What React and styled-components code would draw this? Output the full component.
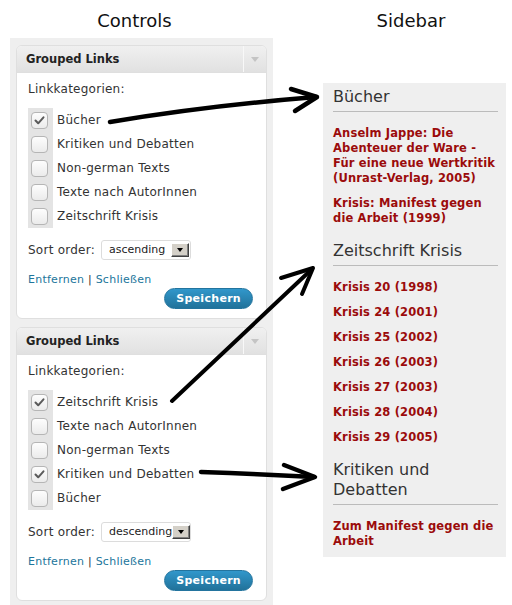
import React from "react";
import styled, { createGlobalStyle } from "styled-components";

const GlobalStyle = createGlobalStyle`
  html, body {
    margin: 0;
    padding: 0;
    background: #fff;
  }
  body {
    font-family: "DejaVu Sans", Verdana, sans-serif;
    color: #333;
  }
`;

const Page = styled.div`
  position: relative;
  width: 512px;
  height: 605px;
  overflow: hidden;
  display: flex;
  align-items: flex-start;
  gap: 50px;
  padding-left: 10px;
  box-sizing: border-box;
`;

const Column = styled.div`
  width: ${props => props.$width}px;
  display: flex;
  flex-direction: column;
  flex-shrink: 0;
`;

const Title = styled.div`
  padding: 10px ${props => props.$shift}px 0 0;
  font-size: 18px;
  line-height: 22px;
  color: #111;
  text-align: center;
`;

const Panel = styled.div`
  margin-top: 6px;
  background: #efefef;
  padding: 7px 6px 5px;
  display: flex;
  flex-direction: column;
  gap: 8px;
`;

const Card = styled.div`
  background: #fff;
  border: 1px solid #dfdfdf;
  border-radius: 6px;
  overflow: hidden;
`;

const CardHead = styled.div`
  display: flex;
  height: 26px;
  border-bottom: 1px solid #dfdfdf;
  background: linear-gradient(#f0f0f0, #e1e1e1);
`;

const CardTitle = styled.div`
  flex: 1;
  padding-left: 9px;
  font-size: 11.5px;
  font-weight: bold;
  line-height: 26px;
  color: #222;
`;

const Toggle = styled.div`
  width: 22px;
  border-left: 1px solid #f8f8f8;
  display: flex;
  align-items: center;
  justify-content: center;
  &::after {
    content: "";
    border-left: 4px solid transparent;
    border-right: 4px solid transparent;
    border-top: 5px solid #c4c4c4;
  }
`;

const CardBody = styled.div`
  padding: 8px 13px 9px 11px;
  font-size: 12px;
  line-height: 16px;
  letter-spacing: 0.25px;
  color: #333;
`;

const CheckList = styled.div`
  margin-top: 11px;
  display: flex;
  flex-direction: column;
`;

const CheckRow = styled.div`
  display: flex;
  align-items: center;
  height: 24px;
`;

const CheckCell = styled.div`
  width: 25px;
  height: 24px;
  padding-left: 3px;
  box-sizing: border-box;
  background: #e4e4e4;
  display: flex;
  align-items: center;
`;

const Box = styled.div`
  width: 17px;
  height: 17px;
  box-sizing: border-box;
  border: 1px solid #b5b5b5;
  border-radius: 4px;
  background: linear-gradient(#fdfdfd, #ebebeb);
  display: flex;
  align-items: center;
  justify-content: center;
`;

const CheckLabel = styled.span`
  margin-left: 4px;
`;

const SortRow = styled.div`
  margin-top: 12px;
  display: flex;
  align-items: center;
  gap: 6px;
`;

const Select = styled.div`
  width: 90px;
  height: 20px;
  box-sizing: border-box;
  border: 1px solid #dcdcdc;
  border-radius: 3px;
  background: #fff;
  padding-left: 7px;
  display: flex;
  align-items: center;
  justify-content: space-between;
  font-size: 11px;
  letter-spacing: 0;
  color: #222;
  white-space: nowrap;
  overflow: hidden;
`;

const SelectButton = styled.span`
  flex-shrink: 0;
  width: 18px;
  height: 14px;
  margin-right: 1px;
  box-sizing: border-box;
  background: #d4d0c8;
  border: 1px solid;
  border-color: #fff #404040 #404040 #fff;
  box-shadow: inset -1px -1px 0 #808080;
  display: flex;
  align-items: center;
  justify-content: center;
  &::after {
    content: "";
    border-left: 3px solid transparent;
    border-right: 3px solid transparent;
    border-top: 4px solid #000;
  }
`;

const Actions = styled.div`
  margin-top: 13px;
  font-size: 11px;
  line-height: 14px;
  color: #333;
`;

const ActionLink = styled.a`
  color: #21759b;
  text-decoration: none;
`;

const ButtonRow = styled.div`
  margin-top: 1px;
  display: flex;
  justify-content: flex-end;
`;

const SaveButton = styled.button`
  height: 21px;
  padding: 0 11px;
  border: 1px solid #23749e;
  border-radius: 11px;
  background: linear-gradient(#3197cb, #21729a);
  color: #fff;
  font-family: "DejaVu Sans", Verdana, sans-serif;
  font-size: 11px;
  font-weight: bold;
  letter-spacing: 0.3px;
  line-height: 19px;
  cursor: pointer;
`;

const Sidebar = styled.div`
  margin-top: 51px;
  background: #efefef;
  padding: 4px 8px 8px 10px;
`;

const Section = styled.div`
  & + & {
    margin-top: 15px;
  }
`;

const SectionHead = styled.h3`
  margin: 0;
  padding-bottom: 4px;
  border-bottom: 1px solid #bbb;
  font-size: 16px;
  line-height: 20px;
  font-weight: normal;
  color: #333;
`;

const LinkList = styled.ul`
  list-style: none;
  margin: 14px 0 0;
  padding: 0 2px 0 0;
`;

const LinkItem = styled.li`
  font-size: 11.5px;
  line-height: 15px;
  font-weight: bold;
  letter-spacing: 0.15px;
  & + & {
    margin-top: 10px;
  }
`;

const SideLink = styled.a`
  color: #9b0b0b;
  text-decoration: none;
`;

const Arrows = styled.svg`
  position: absolute;
  left: 0;
  top: 0;
  width: 512px;
  height: 605px;
  pointer-events: none;
  filter: blur(0.4px);
`;

const Check = () => (
  <svg width="13" height="13" viewBox="0 0 13 13">
    <path
      d="M2.5 6.5 L5.2 9.3 L10.5 3.3"
      fill="none"
      stroke="#5a5a5a"
      strokeWidth="2"
      strokeLinecap="round"
      strokeLinejoin="round"
    />
  </svg>
);

const widgets = [
  {
    order: "ascending",
    items: [
      { label: "Bücher", checked: true },
      { label: "Kritiken und Debatten" },
      { label: "Non-german Texts" },
      { label: "Texte nach AutorInnen" },
      { label: "Zeitschrift Krisis" }
    ]
  },
  {
    order: "descending",
    items: [
      { label: "Zeitschrift Krisis", checked: true },
      { label: "Texte nach AutorInnen" },
      { label: "Non-german Texts" },
      { label: "Kritiken und Debatten", checked: true },
      { label: "Bücher" }
    ]
  }
];

const sections = [
  {
    title: "Bücher",
    links: [
      "Anselm Jappe: Die Abenteuer der Ware - Für eine neue Wertkritik (Unrast-Verlag, 2005)",
      "Krisis: Manifest gegen die Arbeit (1999)"
    ]
  },
  {
    title: "Zeitschrift Krisis",
    links: [
      "Krisis 20 (1998)",
      "Krisis 24 (2001)",
      "Krisis 25 (2002)",
      "Krisis 26 (2003)",
      "Krisis 27 (2003)",
      "Krisis 28 (2004)",
      "Krisis 29 (2005)"
    ]
  },
  {
    title: "Kritiken und Debatten",
    links: ["Zum Manifest gegen die Arbeit"]
  }
];

function Widget({ widget }) {
  return (
    <Card>
      <CardHead>
        <CardTitle>Grouped Links</CardTitle>
        <Toggle />
      </CardHead>
      <CardBody>
        <div>Linkkategorien:</div>
        <CheckList>
          {widget.items.map((item, i) => (
            <CheckRow key={`item_${i}`}>
              <CheckCell>
                <Box>{item.checked ? <Check /> : null}</Box>
              </CheckCell>
              <CheckLabel>{item.label}</CheckLabel>
            </CheckRow>
          ))}
        </CheckList>
        <SortRow>
          <span>Sort order:</span>
          <Select>
            <span>{widget.order}</span>
            <SelectButton />
          </Select>
        </SortRow>
        <Actions>
          <ActionLink href="#">Entfernen</ActionLink> |{" "}
          <ActionLink href="#">Schließen</ActionLink>
        </Actions>
        <ButtonRow>
          <SaveButton>Speichern</SaveButton>
        </ButtonRow>
      </CardBody>
    </Card>
  );
}

export default function App() {
  return (
    <Page>
      <GlobalStyle />
      <Column $width={263}>
        <Title $shift={14}>Controls</Title>
        <Panel>
          {widgets.map((w, i) => (
            <Widget key={`widget_${i}`} widget={w} />
          ))}
        </Panel>
      </Column>
      <Column $width={183}>
        <Title $shift={7}>Sidebar</Title>
        <Sidebar>
          {sections.map((s, i) => (
            <Section key={`section_${i}`}>
              <SectionHead>{s.title}</SectionHead>
              <LinkList>
                {s.links.map((l, j) => (
                  <LinkItem key={`link_${i}_${j}`}>
                    <SideLink href="#">{l}</SideLink>
                  </LinkItem>
                ))}
              </LinkList>
            </Section>
          ))}
        </Sidebar>
      </Column>
      <Arrows viewBox="0 0 512 605">
        <g fill="none" stroke="#000" strokeLinecap="round" strokeLinejoin="round">
          <path d="M110 122 Q205 106 316 97" strokeWidth="4.5" />
          <path d="M291 89 L317 97 L295 111" strokeWidth="4.5" />
          <path d="M172 401 L312 269" strokeWidth="4" />
          <path d="M281 278 L313 268 L302 294" strokeWidth="4" />
          <path d="M201 472 Q260 474 314 477" strokeWidth="4.5" />
          <path d="M284 465 L315 477 L283 489" strokeWidth="4.5" />
        </g>
      </Arrows>
    </Page>
  );
}
